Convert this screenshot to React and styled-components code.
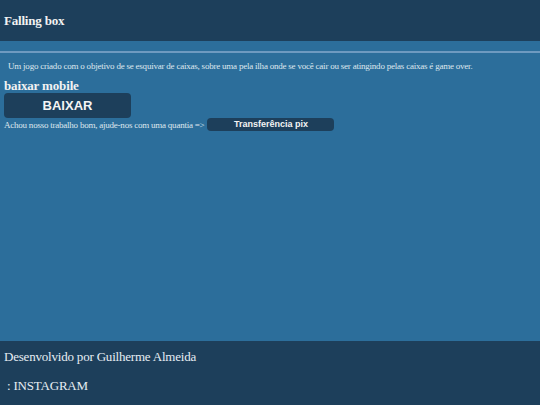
import styled, { createGlobalStyle } from 'styled-components';

const GlobalStyle = createGlobalStyle`
  html, body {
    margin: 0;
    padding: 0;
    background: #2c6e9b;
  }
  #root {
    min-height: 100vh;
    display: flex;
    flex-direction: column;
  }
`

const Page = styled.div`
  flex: 1;
  display: flex;
  flex-direction: column;
  font-family: "Liberation Serif", serif;
  color: #e6edf3;
`

const Header = styled.header`
  height: 41px;
  background: #1d3f5b;
  display: flex;
  align-items: center;
  padding: 0 4px;
`

const Title = styled.h1`
  margin: 0;
  font-size: 13px;
  font-weight: bold;
  letter-spacing: -0.2px;
  color: #f2f2f2;
`

const Main = styled.main`
  flex: 1;
  padding-top: 10px;
`

const Rule = styled.hr`
  margin: 0;
  border: none;
  height: 2px;
  background: #6e9ac0;
`

const Content = styled.section`
  padding: 0 4px;
`

const Description = styled.p`
  margin: 7px 0 0;
  padding-left: 4px;
  font-size: 9px;
  line-height: 12px;
  letter-spacing: -0.22px;
  color: #dfe7ee;
`

const Subtitle = styled.h2`
  margin: 6px 0 0;
  font-size: 13px;
  line-height: 15px;
  font-weight: bold;
  letter-spacing: -0.15px;
  color: #f2f2f2;
`

const Button = styled.button`
  display: block;
  width: 127px;
  height: 25px;
  margin-top: 0;
  border: none;
  border-radius: 4px;
  background: #1d3f5b;
  color: #f4f4f4;
  font-family: "Liberation Sans", Arial, sans-serif;
  font-weight: bold;
  font-size: 13px;
  cursor: pointer;
`

const DonateRow = styled.div`
  display: flex;
  align-items: center;
  gap: 3px;
  font-size: 9px;
  letter-spacing: -0.23px;
  color: #dfe7ee;
  height: 13px;
`

const PixButton = styled.button`
  width: 127px;
  height: 13px;
  padding: 0;
  border: none;
  border-radius: 4px;
  background: #1d3f5b;
  color: #f4f4f4;
  font-family: "Liberation Sans", Arial, sans-serif;
  font-weight: bold;
  font-size: 9px;
  line-height: 13px;
  letter-spacing: 0;
`

const Footer = styled.footer`
  height: 64px;
  background: #1d3f5b;
  padding: 0 4px;
  box-sizing: border-box;
  display: flex;
  flex-direction: column;
  font-size: 13px;
  letter-spacing: -0.2px;
  color: #e6edf3;
`

const FooterLine = styled.p`
  margin: 0;
  line-height: 15px;
  padding-top: ${p => p.$top}px;
  padding-left: ${p => p.$indent || 0}px;
`

export default function App() {
  return (
    <>
      <GlobalStyle />
      <Page>
        <Header>
          <Title>Falling box</Title>
        </Header>
        <Main>
          <Rule />
          <Content>
            <Description>
              Um jogo criado com o objetivo de se esquivar de caixas, sobre uma pela ilha onde se você cair ou ser atingindo pelas caixas é game over.
            </Description>
            <Subtitle>baixar mobile</Subtitle>
            <Button>BAIXAR</Button>
            <DonateRow>
              Achou nosso trabalho bom, ajude-nos com uma quantia =&gt;
              <PixButton>Transferência pix</PixButton>
            </DonateRow>
          </Content>
        </Main>
        <Footer>
          <FooterLine $top={8}>Desenvolvido por Guilherme Almeida</FooterLine>
          <FooterLine $top={14} $indent={3}>: INSTAGRAM</FooterLine>
        </Footer>
      </Page>
    </>
  )
}
